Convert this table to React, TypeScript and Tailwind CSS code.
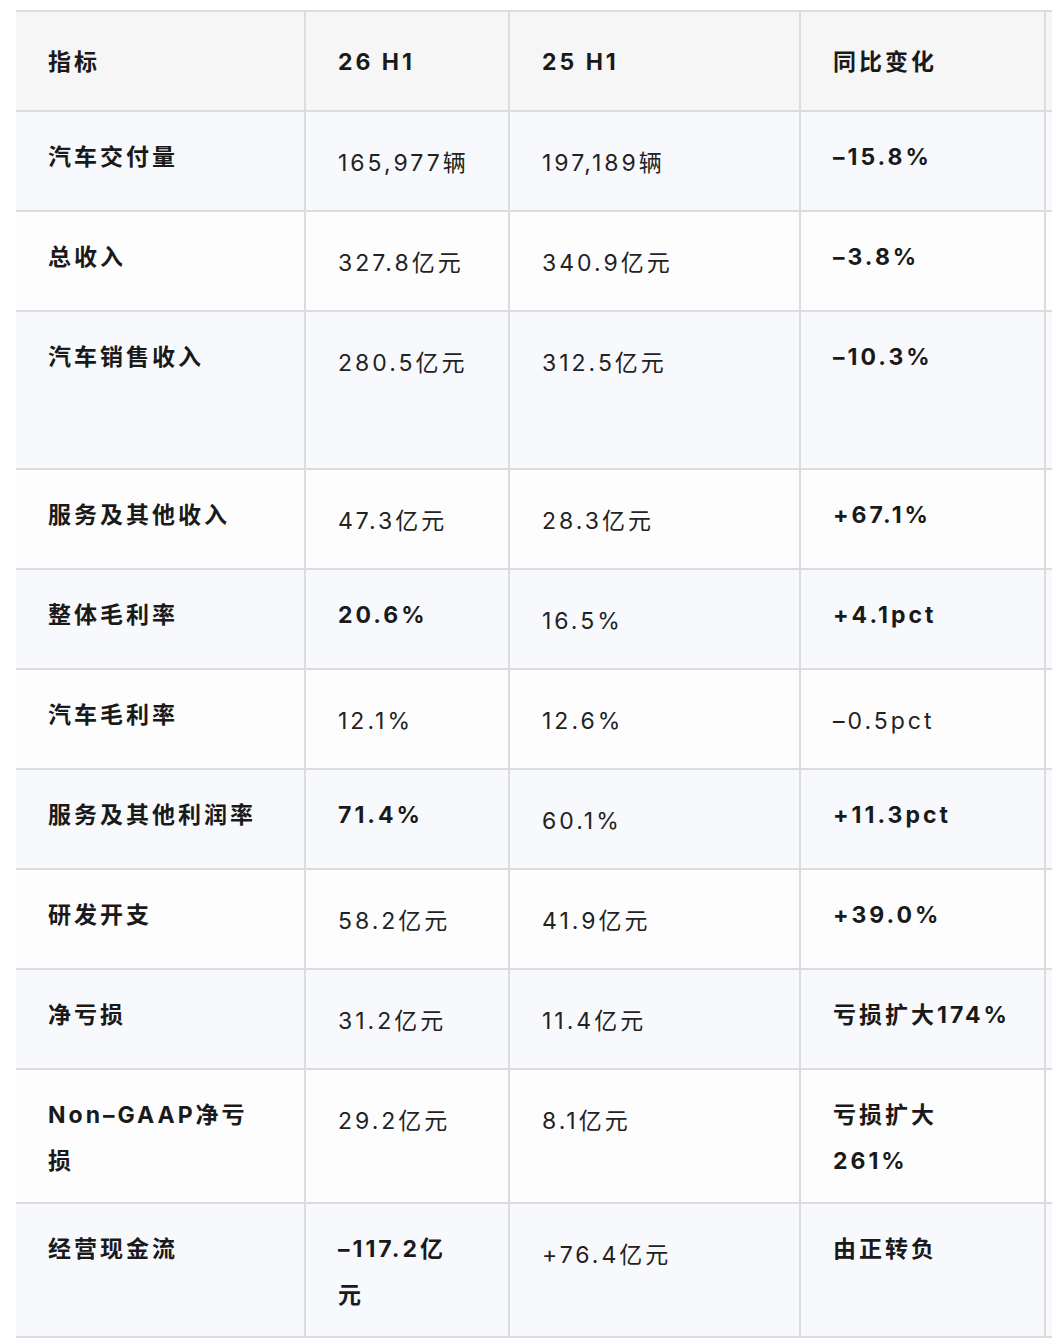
type Cell = { text: React.ReactNode; bold?: boolean };

type Row = {
  name: React.ReactNode;
  cur: Cell;
  prev: Cell;
  yoy: Cell;
  h: string;
};

// 财报对比表数据
const rows: Row[] = [
  { name: '汽车交付量', cur: { text: '165,977辆' }, prev: { text: '197,189辆' }, yoy: { text: '–15.8%', bold: true }, h: 'h-[100px]' },
  { name: '总收入', cur: { text: '327.8亿元' }, prev: { text: '340.9亿元' }, yoy: { text: '–3.8%', bold: true }, h: 'h-[100px]' },
  { name: '汽车销售收入', cur: { text: '280.5亿元' }, prev: { text: '312.5亿元' }, yoy: { text: '–10.3%', bold: true }, h: 'h-[158px]' },
  { name: '服务及其他收入', cur: { text: '47.3亿元' }, prev: { text: '28.3亿元' }, yoy: { text: '+67.1%', bold: true }, h: 'h-[100px]' },
  { name: '整体毛利率', cur: { text: '20.6%', bold: true }, prev: { text: '16.5%' }, yoy: { text: '+4.1pct', bold: true }, h: 'h-[100px]' },
  { name: '汽车毛利率', cur: { text: '12.1%' }, prev: { text: '12.6%' }, yoy: { text: '–0.5pct' }, h: 'h-[100px]' },
  { name: '服务及其他利润率', cur: { text: '71.4%', bold: true }, prev: { text: '60.1%' }, yoy: { text: '+11.3pct', bold: true }, h: 'h-[100px]' },
  { name: '研发开支', cur: { text: '58.2亿元' }, prev: { text: '41.9亿元' }, yoy: { text: '+39.0%', bold: true }, h: 'h-[100px]' },
  { name: '净亏损', cur: { text: '31.2亿元' }, prev: { text: '11.4亿元' }, yoy: { text: '亏损扩大174%', bold: true }, h: 'h-[100px]' },
  {
    name: (<>Non–GAAP净亏<br />损</>),
    cur: { text: '29.2亿元' },
    prev: { text: '8.1亿元' },
    yoy: { text: (<>亏损扩大<br />261%</>), bold: true },
    h: 'h-[134px]',
  },
  {
    name: '经营现金流',
    cur: { text: (<>–117.2亿<br />元</>), bold: true },
    prev: { text: '+76.4亿元' },
    yoy: { text: '由正转负', bold: true },
    h: 'h-[134px]',
  },
];

const cols = 'grid grid-cols-[290px_204px_291px_245px_220px]';

function Td({ cell, last }: { cell: Cell; last?: boolean }) {
  return (
    <div
      className={`${last ? '' : 'border-r-2 border-[#dcdcdf]'} pl-8 pr-4 leading-[46px] whitespace-nowrap ${
        cell.bold ? 'pt-[22px] font-bold text-[#1a1a1a]' : 'pt-[28px] font-normal text-[#222222]'
      }`}
    >
      {cell.text}
    </div>
  );
}

export default function App() {
  return (
    <div
      className="w-[1052px] h-[1340px] overflow-hidden bg-white text-[23px] tracking-[3px]"
      style={{ fontFamily: '"Inter", "Noto Sans CJK SC", sans-serif' }}
    >
      <div className="ml-4 mt-[10px] w-[1250px] border-t-2 border-[#dcdcdf]">
        {/* 表头 */}
        <div className={`${cols} h-[100px] bg-[#f6f6f6] border-b-2 border-[#dcdcdf] font-bold text-[#1a1a1a]`}>
          <div className="border-r-2 border-[#dcdcdf] pl-8 pt-[27px] leading-[46px]">指标</div>
          <div className="border-r-2 border-[#dcdcdf] pl-8 pt-[27px] leading-[46px]">26 H1</div>
          <div className="border-r-2 border-[#dcdcdf] pl-8 pt-[27px] leading-[46px]">25 H1</div>
          <div className="border-r-2 border-[#dcdcdf] pl-8 pt-[27px] leading-[46px]">同比变化</div>
          <div />
        </div>

        {rows.map((r, i) => (
          <div
            key={i}
            className={`${cols} ${r.h} border-b-2 border-[#dcdcdf] ${i % 2 === 0 ? 'bg-[#f8f9fc]' : 'bg-[#fdfdfd]'}`}
          >
            <Td cell={{ text: r.name, bold: true }} />
            <Td cell={r.cur} />
            <Td cell={r.prev} />
            <Td cell={r.yoy} />
            <div />
          </div>
        ))}
      </div>
    </div>
  );
}
